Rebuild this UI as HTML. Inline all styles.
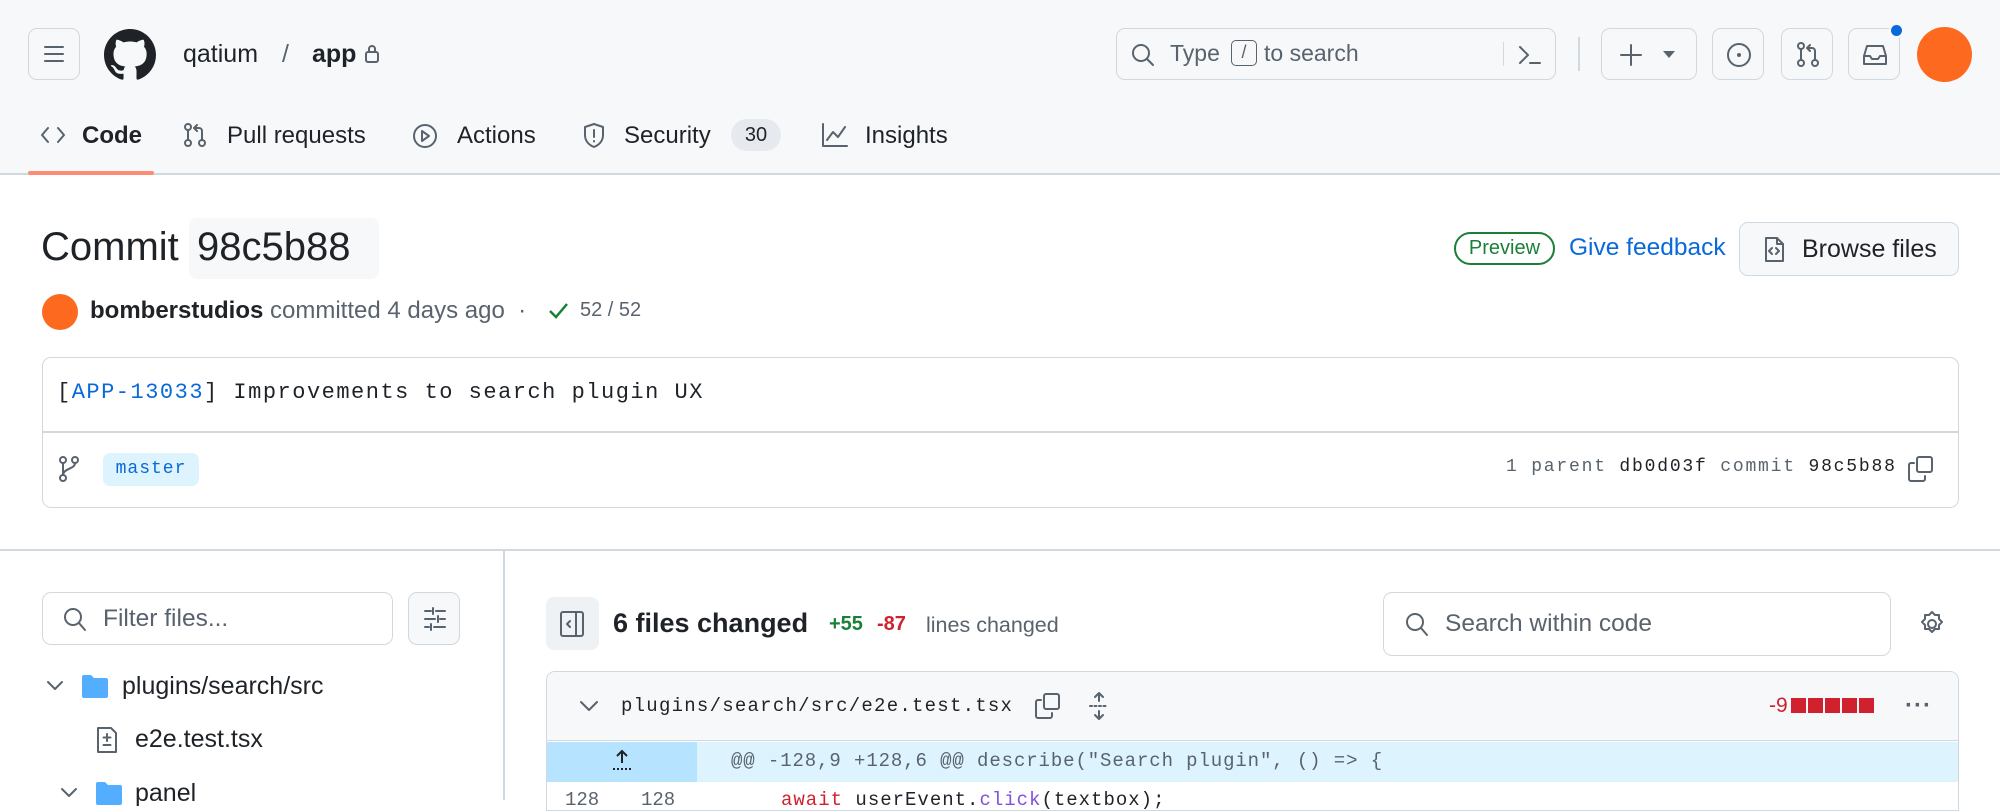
<!DOCTYPE html>
<html><head><meta charset="utf-8"><style>
*{box-sizing:border-box;margin:0;padding:0}
body{width:2000px;height:800px;overflow:hidden;background:#fff;font-family:"Liberation Sans",sans-serif;color:#1f2328;position:relative}
.a{position:absolute;white-space:nowrap}
.mono{font-family:"Liberation Mono",monospace}
.btn{position:absolute;border:1.5px solid #d1d9e0;border-radius:9px;background:#f6f8fa}
svg{display:block}
.ic{fill:none;stroke:#59636e;stroke-width:2;stroke-linecap:round;stroke-linejoin:round}
</style></head><body>
<div class="a" style="left:0;top:0;width:2000px;height:175px;background:#f6f8fa;border-bottom:2px solid #d1d9e0"></div>
<div class="btn" style="left:28px;top:28px;width:52px;height:52px"><svg class="a" style="left:14px;top:15px" width="22" height="20"><path class="ic" stroke="#59636e" d="M2 3h18M2 10h18M2 17h18"/></svg></div>
<svg class="a" style="left:104px;top:29px" width="52" height="52" viewBox="0 0 16 16"><path fill="#1f2328" d="M8 0C3.58 0 0 3.58 0 8c0 3.540 2.29 6.53 5.470 7.59.4.07.55-.17.55-.38 0-.19-.01-.82-.01-1.49-2.01.37-2.53-.49-2.69-.94-.09-.23-.48-.94-.82-1.130-.28-.15-.68-.52-.01-.53.63-.01 1.08.58 1.230.82.72 1.210 1.870.87 2.330.66.07-.52.28-.87.51-1.07-1.78-.2-3.640-.89-3.640-3.95 0-.87.31-1.59.82-2.150-.08-.2-.36-1.020.08-2.120 0 0 .67-.21 2.2.82.64-.18 1.32-.27 2-.27.68 0 1.36.09 2 .27 1.530-1.040 2.2-.82 2.2-.82.44 1.1.16 1.920.08 2.120.51.56.82 1.270.82 2.150 0 3.070-1.870 3.750-3.650 3.950.29.25.54.73.54 1.480 0 1.070-.01 1.930-.01 2.2 0 .21.15.46.55.38A8.013 8.013 0 0016 8c0-4.420-3.580-8-8-8z"/></svg>
<div class="a" style="left:183px;top:40px;font-size:25px">qatium</div>
<div class="a" style="left:282px;top:40px;font-size:25px;color:#59636e">/</div>
<div class="a" style="left:312px;top:40px;font-size:25px;font-weight:bold">app</div>
<svg class="a" style="left:364px;top:44px" width="16" height="20"><rect x="2" y="8" width="12" height="10" rx="2" class="ic" stroke="#1f2328"/><path d="M5 8V5a3 3 0 0 1 6 0v3" class="ic" stroke="#1f2328"/></svg>

<!-- tabs -->
<svg class="a" style="left:40px;top:125px" width="26" height="20"><path class="ic" d="M8 3L2 10l6 7M18 3l6 7-6 7"/></svg>
<div class="a" style="left:82px;top:122px;font-size:24px;font-weight:bold">Code</div>
<div class="a" style="left:28px;top:171px;width:126px;height:4px;background:#fd8c73;border-radius:2px"></div>
<svg class="a" style="left:183px;top:122px" width="24" height="26"><circle cx="5" cy="5" r="3" class="ic"/><circle cx="5" cy="21" r="3" class="ic"/><circle cx="19" cy="21" r="3" class="ic"/><path class="ic" d="M5 8v10M19 18V9a3 3 0 0 0-3-3h-4M14 3l-3 3 3 3"/></svg>
<div class="a" style="left:227px;top:122px;font-size:24px">Pull requests</div>
<svg class="a" style="left:412px;top:123px" width="26" height="26"><circle cx="13" cy="13" r="11" class="ic"/><path d="M10 8v10l7-5z" class="ic"/></svg>
<div class="a" style="left:457px;top:122px;font-size:24px">Actions</div>
<svg class="a" style="left:582px;top:122px" width="24" height="28"><path class="ic" d="M12 2L3 5v8c0 6 4 10 9 12 5-2 9-6 9-12V5z"/><path class="ic" d="M12 8v7M12 19v.5"/></svg>
<div class="a" style="left:624px;top:122px;font-size:24px">Security</div>
<div class="a" style="left:731px;top:119px;width:50px;height:32px;border-radius:16px;background:#e6eaef;font-size:20px;text-align:center;line-height:32px">30</div>
<svg class="a" style="left:821px;top:122px" width="28" height="26"><path class="ic" d="M2 2v22h24M6 18l6-8 5 5 7-10"/></svg>
<div class="a" style="left:865px;top:122px;font-size:24px">Insights</div>

<!-- search -->
<div class="btn" style="left:1116px;top:28px;width:440px;height:52px;background:#f6f8fa"></div>
<svg class="a" style="left:1130px;top:42px" width="26" height="26"><circle cx="11" cy="11" r="8" class="ic"/><path class="ic" d="M17 17l6 6"/></svg>
<div class="a" style="left:1170px;top:40px;font-size:23px;color:#59636e">Type</div>
<div class="a" style="left:1231px;top:40px;width:26px;height:26px;border:1.5px solid #59636e;border-radius:5px;font-size:18px;color:#59636e;text-align:center;line-height:23px">/</div>
<div class="a" style="left:1264px;top:40px;font-size:23px;color:#59636e">to search</div>
<div class="a" style="left:1503px;top:42px;width:1px;height:24px;background:#d1d9e0"></div>
<svg class="a" style="left:1517px;top:44px" width="26" height="22"><path class="ic" d="M3 3l8 8-8 8M13 19h10"/></svg>
<div class="a" style="left:1578px;top:37px;width:2px;height:34px;background:#d1d9e0"></div>
<div class="btn" style="left:1601px;top:28px;width:96px;height:52px"><svg class="a" style="left:16px;top:13px" width="26" height="26"><path class="ic" stroke="#59636e" d="M13 3v20M3 13h20"/></svg><svg class="a" style="left:60px;top:21px" width="14" height="10"><path d="M1 1h12L7 8z" fill="#59636e"/></svg></div>
<div class="btn" style="left:1712px;top:28px;width:52px;height:52px"><svg class="a" style="left:12px;top:12px" width="28" height="28"><circle cx="14" cy="14" r="11" class="ic"/><circle cx="14" cy="14" r="2" fill="#59636e"/></svg></div>
<div class="btn" style="left:1781px;top:28px;width:52px;height:52px"><svg class="a" style="left:14px;top:12px" width="24" height="28"><circle cx="5" cy="5" r="3" class="ic"/><circle cx="5" cy="22" r="3" class="ic"/><circle cx="19" cy="22" r="3" class="ic"/><path class="ic" d="M5 8v11M19 19V10a3 3 0 0 0-3-3h-4M14 4l-3 3 3 3"/></svg></div>
<div class="btn" style="left:1848px;top:28px;width:52px;height:52px"><svg class="a" style="left:12px;top:13px" width="28" height="26"><path class="ic" d="M3 14l3-10h16l3 10v8H3zM3 14h6l2 3h6l2-3h6"/></svg></div>
<div class="a" style="left:1889px;top:23px;width:15px;height:15px;border-radius:50%;background:#0969da;border:2px solid #f6f8fa"></div>
<div class="a" style="left:1917px;top:27px;width:55px;height:55px;border-radius:50%;background:#fd6a1f"></div>

<!-- commit title -->
<div class="a" style="left:41px;top:225px;font-size:40px">Commit</div>
<div class="a" style="left:189px;top:218px;width:190px;height:61px;background:#f6f8fa;border-radius:8px"></div>
<div class="a" style="left:197px;top:225px;font-size:40px">98c5b88</div>
<div class="a" style="left:1454px;top:232px;width:101px;height:33px;border:2px solid #1a7f37;border-radius:17px;color:#1a7f37;font-size:20px;text-align:center;line-height:29px">Preview</div>
<div class="a" style="left:1569px;top:234px;font-size:24.5px;color:#0969da">Give feedback</div>
<div class="btn" style="left:1739px;top:222px;width:220px;height:54px"><svg class="a" style="left:22px;top:13px" width="24" height="28"><path class="ic" d="M4 2h11l6 6v17H4z"/><path class="ic" d="M15 2v6h6M10 12l-3 3 3 3M14 12l3 3-3 3" stroke-width="1.6"/></svg><div class="a" style="left:62px;top:12px;font-size:25px">Browse files</div></div>

<div class="a" style="left:42px;top:294px;width:36px;height:36px;border-radius:50%;background:#fd6a1f"></div>
<div class="a" style="left:90px;top:297px;font-size:24px"><b>bomberstudios</b> <span style="color:#59636e">committed 4 days ago &nbsp;·</span></div>
<svg class="a" style="left:547px;top:300px" width="22" height="22"><path d="M3 11l6 6L20 4" fill="none" stroke="#1a7f37" stroke-width="2.5"/></svg>
<div class="a" style="left:580px;top:299px;font-size:20px;color:#59636e">52 / 52</div>

<!-- message box -->
<div class="a" style="left:42px;top:357px;width:1917px;height:151px;border:1.5px solid #d1d9e0;border-radius:9px"></div>
<div class="a" style="left:43px;top:431px;width:1915px;height:1.5px;background:#d1d9e0"></div>
<div class="a mono" style="left:57px;top:380px;font-size:22px;letter-spacing:1.5px">[<span style="color:#0969da">APP-13033</span>] Improvements to search plugin UX</div>
<svg class="a" style="left:58px;top:456px" width="22" height="26"><circle cx="5" cy="4" r="3" class="ic"/><circle cx="17" cy="4" r="3" class="ic"/><circle cx="5" cy="22" r="3" class="ic"/><path class="ic" d="M5 7v12M17 7c0 6-10 5-12 11"/></svg>
<div class="a mono" style="left:103px;top:453px;width:96px;height:33px;background:#ddf4ff;border-radius:7px;color:#0969da;font-size:18px;text-align:center;line-height:33px;letter-spacing:1px">master</div>
<div class="a mono" style="left:1506px;top:457px;font-size:18px;letter-spacing:1.8px;color:#59636e">1 parent <span style="color:#1f2328">db0d03f</span> commit <span style="color:#1f2328">98c5b88</span></div>
<svg class="a" style="left:1906px;top:454px" width="30" height="30"><rect x="11" y="3" width="15" height="15" rx="2" class="ic" stroke="#1f2328"/><path class="ic" stroke="#1f2328" d="M8 9H5a2 2 0 0 0-2 2v14a2 2 0 0 0 2 2h12a2 2 0 0 0 2-2v-3"/></svg>

<!-- lower -->
<div class="a" style="left:0;top:549px;width:2000px;height:2px;background:#d1d9e0"></div>
<div class="a" style="left:503px;top:550px;width:2px;height:250px;background:#d1d9e0"></div>
<div class="a" style="left:42px;top:592px;width:351px;height:53px;border:1.5px solid #d1d9e0;border-radius:9px"></div>
<svg class="a" style="left:62px;top:606px" width="26" height="28"><circle cx="11" cy="11" r="8" class="ic"/><path class="ic" d="M17 17l6 7"/></svg>
<div class="a" style="left:103px;top:605px;font-size:24.5px;color:#59636e">Filter files...</div>
<div class="btn" style="left:408px;top:592px;width:52px;height:53px"><svg class="a" style="left:13px;top:13px" width="26" height="26"><path class="ic" d="M3 5h6M14 5h9M3 13h10M18 13h5M3 21h4M12 21h11M11 2v6M16 10v6M9 18v6"/></svg></div>
<svg class="a" style="left:46px;top:679px" width="18" height="14"><path class="ic" d="M2 3l7 7 7-7"/></svg>
<svg class="a" style="left:81px;top:673px" width="28" height="26"><path d="M1 4a2 2 0 0 1 2-2h7l3 3h12a2 2 0 0 1 2 2v16a2 2 0 0 1-2 2H3a2 2 0 0 1-2-2z" fill="#54aeff"/></svg>
<div class="a" style="left:122px;top:672px;font-size:25px">plugins/search/src</div>
<svg class="a" style="left:96px;top:726px" width="22" height="28"><path class="ic" stroke="#1f2328" d="M2 2h13l5 5v19H2z"/><path class="ic" stroke="#1f2328" stroke-width="1.6" d="M11 8v7M7.5 11.5h7M7.5 19h7"/></svg>
<div class="a" style="left:135px;top:725px;font-size:25px">e2e.test.tsx</div>
<svg class="a" style="left:60px;top:786px" width="18" height="14"><path class="ic" d="M2 3l7 7 7-7"/></svg>
<svg class="a" style="left:95px;top:780px" width="28" height="26"><path d="M1 4a2 2 0 0 1 2-2h7l3 3h12a2 2 0 0 1 2 2v16a2 2 0 0 1-2 2H3a2 2 0 0 1-2-2z" fill="#54aeff"/></svg>
<div class="a" style="left:135px;top:779px;font-size:25px">panel</div>

<div class="a" style="left:546px;top:597px;width:53px;height:53px;background:#eff2f5;border-radius:8px"><svg class="a" style="left:12px;top:12px" width="30" height="30"><rect x="3" y="3" width="22" height="24" rx="2" class="ic" stroke="#1f2328"/><path class="ic" stroke="#1f2328" d="M18 3v24M12 12l-3 3 3 3"/></svg></div>
<div class="a" style="left:613px;top:608px;font-size:27px;font-weight:bold">6 files changed</div>
<div class="a" style="left:829px;top:613px;font-size:20px;font-weight:bold;color:#1a7f37">+55</div>
<div class="a" style="left:877px;top:613px;font-size:20px;font-weight:bold;color:#cf222e">-87</div>
<div class="a" style="left:926px;top:613px;font-size:21.5px;color:#59636e">lines changed</div>
<div class="a" style="left:1383px;top:592px;width:508px;height:64px;border:1.5px solid #d1d9e0;border-radius:9px"></div>
<svg class="a" style="left:1404px;top:611px" width="26" height="28"><circle cx="11" cy="11" r="8" class="ic"/><path class="ic" d="M17 17l6 7"/></svg>
<div class="a" style="left:1445px;top:610px;font-size:24.5px;color:#59636e">Search within code</div>
<svg class="a" style="left:1918px;top:610px" width="28" height="28"><circle cx="14" cy="14" r="4" class="ic"/><path class="ic" d="M14 2l3 3h4v4l3 3-3 3v4h-4l-3 3-3-3H7v-4l-3-3 3-3V5h4z"/></svg>

<div class="a" style="left:546px;top:671px;width:1413px;height:140px;border:1.5px solid #d1d9e0;border-radius:9px 9px 0 0;overflow:hidden">
 <div class="a" style="left:0;top:0;width:1413px;height:69px;background:#f6f8fa;border-bottom:1.5px solid #d1d9e0"></div>
 <svg class="a" style="left:32px;top:27px" width="20" height="14"><path class="ic" d="M2 3l8 8 8-8"/></svg>
 <div class="a mono" style="left:74px;top:23px;font-size:19px;letter-spacing:1.25px">plugins/search/src/e2e.test.tsx</div>
 <svg class="a" style="left:486px;top:19px" width="30" height="30"><rect x="11" y="3" width="15" height="15" rx="2" class="ic" stroke="#1f2328"/><path class="ic" stroke="#1f2328" d="M8 9H5a2 2 0 0 0-2 2v14a2 2 0 0 0 2 2h12a2 2 0 0 0 2-2v-3"/></svg>
 <svg class="a" style="left:540px;top:19px" width="24" height="30"><path class="ic" d="M3 15h18" stroke-dasharray="2 2.5"/><path class="ic" d="M12 2v8M8 6l4-4 4 4M12 28v-8M8 24l4 4 4-4"/></svg>
 <div class="a" style="left:1222px;top:22px;font-size:21px;color:#cf222e">-9</div>
 <div class="a" style="left:1244px;top:26px;display:flex;gap:2px"><i style="width:15px;height:15px;background:#cf222e;display:block"></i><i style="width:15px;height:15px;background:#cf222e;display:block"></i><i style="width:15px;height:15px;background:#cf222e;display:block"></i><i style="width:15px;height:15px;background:#cf222e;display:block"></i><i style="width:15px;height:15px;background:#cf222e;display:block"></i></div>
 <div class="a" style="left:1358px;top:20px;font-size:24px;font-weight:bold;color:#59636e;letter-spacing:1px">···</div>
 <div class="a" style="left:0;top:70px;width:150px;height:40px;background:#b6e3ff"></div>
 <div class="a" style="left:150px;top:70px;width:1263px;height:40px;background:#ddf4ff"></div>
 <svg class="a" style="left:64px;top:77px" width="22" height="24"><path d="M11 2v12M6 7l5-5 5 5" fill="none" stroke="#1f2328" stroke-width="2"/><path d="M2 20h18" stroke="#1f2328" stroke-width="2" stroke-dasharray="2 2"/></svg>
 <div class="a mono" style="left:184px;top:78px;font-size:19px;color:#59636e;letter-spacing:0.9px">@@ -128,9 +128,6 @@ describe("Search plugin", () =&gt; {</div>
 <div class="a mono" style="left:18px;top:117px;font-size:19px;color:#59636e">128</div>
 <div class="a mono" style="left:94px;top:117px;font-size:19px;color:#59636e">128</div>
 <div class="a mono" style="left:234px;top:117px;font-size:19px;letter-spacing:1px"><span style="color:#cf222e">await</span> userEvent.<span style="color:#8250df">click</span>(textbox);</div>
</div>
</body></html>
